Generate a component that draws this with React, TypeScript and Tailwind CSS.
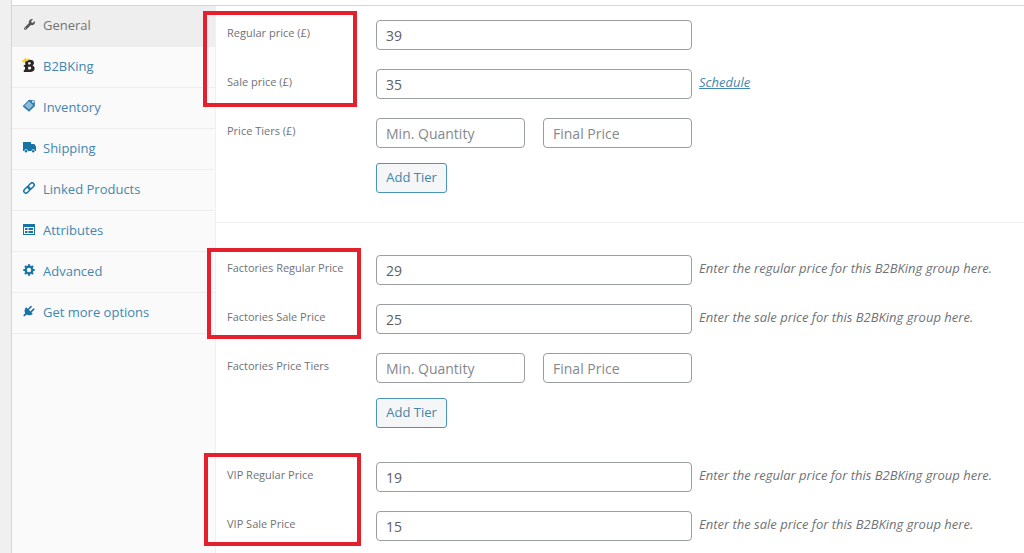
import clsx from "clsx";
import type { ReactNode } from "react";
import { FaWrench } from "react-icons/fa";

const B2BKingIcon = () => (
  <svg viewBox="0 0 14 16" className="h-4 w-3.5">
    <path
      fillRule="evenodd"
      fill="#2b2725"
      d="M3.2 5H2V2.800h5.800c2.700 0 4.200 1.200 4.200 3.300 0 1.200-.6 2.100-1.600 2.500 1.400.4 2.200 1.500 2.200 2.900 0 2.300-1.700 3.500-4.500 3.500H1.800v-2.200h1.200V9.800H1.800V7.900h1.400ZM6.200 5.200v2.200h1.300c.9 0 1.300-.4 1.300-1.100s-.4-1.100-1.300-1.100Zm0 4.500v2.700h1.500c1 0 1.500-.5 1.500-1.400s-.5-1.300-1.500-1.300Z"
    />
    <path d="M.8 5.800 0 3l2 .3L3.300.6l1.600 1.600L7.200 1 6.400 3.400Z" fill="#f5d22e" />
  </svg>
);

const InventoryIcon = () => (
  <svg viewBox="0 0 14 14" className="size-3.5" strokeLinejoin="round">
    <path d="M.6 7.200 7 .8l5.600.8.400 5.400L7 12.800Z" fill="#2a7aa8" />
    <path d="M2 6.600 6.900 1.900l4.700 4.300L7 10.800Z" fill="#8db9d6" stroke="#4288b3" />
    <circle cx="11" cy="2.800" r="1.100" fill="#d3e6f2" />
  </svg>
);

const ShippingIcon = () => (
  <svg viewBox="0 0 13 11" className="h-[11px] w-[13px]" fill="currentColor">
    <path d="M0 0h8v2h3.300L13 4.600V9h-1.100a1.700 1.700 0 0 0-3.400 0H4.700a1.700 1.700 0 0 0-3.400 0H0Z" />
    <circle cx="3" cy="9.300" r="1.200" />
    <circle cx="10.200" cy="9.300" r="1.200" />
  </svg>
);

const LinkIcon = () => (
  <svg viewBox="0 0 12 12" className="size-3">
    <g
      transform="rotate(-45 6 6)"
      fill="none"
      stroke="currentColor"
      strokeWidth="1.500"
    >
      <rect x="-.4" y="3.900" width="7" height="4.200" rx="2.100" />
      <rect x="5.400" y="3.900" width="7" height="4.200" rx="2.100" />
    </g>
  </svg>
);

const AttributesIcon = () => (
  <svg viewBox="0 0 12 11" className="h-[11px] w-3" fill="currentColor">
    <path fillRule="evenodd" d="M0 0h12v11H0ZM1 3v7h10V3Z" />
    <path d="M2 4h2.500v2H2Zm0 3h2.500v2H2Zm3.500-3H10v2H5.500Zm0 3H10v2H5.500Z" />
  </svg>
);

const GearIcon = () => (
  <svg viewBox="0 0 12 12" className="size-3">
    <circle
      cx="6"
      cy="6"
      r="3.300"
      fill="none"
      stroke="currentColor"
      strokeWidth="2.200"
    />
    <path
      d="M6 .3v2M6 9.700v2M.3 6h2M9.700 6h2M2 2l1.400 1.400M8.600 8.600 10 10M10 2 8.600 3.400M3.400 8.600 2 10"
      stroke="currentColor"
      strokeWidth="2.200"
    />
  </svg>
);

const PlugIcon = () => (
  <svg viewBox="0 0 12 12" className="size-3">
    <path
      fill="currentColor"
      d="M3.200 2.200 9.800 8.700C8 10.500 5.500 10.600 3.600 9.500L1.800 11.200H.5V9.900l1.700-1.700C1.100 6.200 1.400 3.900 3.200 2.200Z"
    />
    <path
      d="M5.500 4.300 8 1.600M8 6.800l2.800-2.600"
      stroke="currentColor"
      strokeWidth="1.600"
      strokeLinecap="round"
    />
  </svg>
);

const tabs: { label: string; icon: ReactNode; active?: boolean }[] = [
  { label: "General", icon: <FaWrench className="size-[11px]" />, active: true },
  { label: "B2BKing", icon: <B2BKingIcon /> },
  { label: "Inventory", icon: <InventoryIcon /> },
  { label: "Shipping", icon: <ShippingIcon /> },
  { label: "Linked Products", icon: <LinkIcon /> },
  { label: "Attributes", icon: <AttributesIcon /> },
  { label: "Advanced", icon: <GearIcon /> },
  { label: "Get more options", icon: <PlugIcon /> },
];

const inputClass =
  "h-[30px] min-w-0 rounded border border-[#9a9da1] bg-white px-[9px] text-sm text-[#5c6066] placeholder:text-[#85888c]";

const labelClass = "w-[149px] shrink-0 pt-[5px] text-[11px] leading-4";

const PriceField = ({
  id,
  label,
  value,
  children,
}: {
  id: string;
  label: string;
  value: string;
  children?: ReactNode;
}) => (
  <div className="flex">
    <label htmlFor={id} className={labelClass}>
      {label}
    </label>
    <input id={id} defaultValue={value} className={clsx(inputClass, "w-[316px]")} />
    <div className="ml-[7px] pt-1 text-[13px] leading-[18px] italic">{children}</div>
  </div>
);

const PriceTiers = ({ label }: { label: string }) => (
  <div className="flex" role="group" aria-label={label}>
    <span className={labelClass}>{label}</span>
    <div className="w-[316px]">
      <div className="flex gap-[18px]">
        <input
          placeholder="Min. Quantity"
          aria-label="Min. Quantity"
          className={clsx(inputClass, "flex-1")}
        />
        <input
          placeholder="Final Price"
          aria-label="Final Price"
          className={clsx(inputClass, "flex-1")}
        />
      </div>
      <button
        type="button"
        className="mt-[15px] h-[30px] w-[71px] rounded-[3px] border border-[#4a94ba] bg-[#f4f6f7] text-[13px] whitespace-nowrap text-[#4585a8]"
      >
        Add Tier
      </button>
    </div>
  </div>
);

// Red frame drawn over the labels of a price group
const Highlight = ({ className }: { className: string }) => (
  <div
    className={clsx(
      "pointer-events-none absolute border-4 border-[#e3202b]",
      className,
    )}
  />
);

const App = () => {
  return (
    <div className="flex min-h-screen flex-col bg-[#f0f0f1] pl-[11px] font-['Open_Sans','Noto_Sans',sans-serif] text-[#6f7276]">
      <div className="h-[5px] border-l border-[#d5d6d8] bg-white" />
      <div className="flex flex-1 border-t border-l border-[#d5d6d8] bg-white">
        <nav className="w-[204px] shrink-0 border-r border-[#f0f0f0] bg-[#fafafa]">
          <ul>
            {tabs.map((tab) => (
              <li key={tab.label}>
                <a
                  href="#"
                  className={clsx(
                    "flex h-[41px] items-center border-b border-[#eeeeee] pl-2.5 text-[13px]",
                    tab.active ? "bg-[#eeeeee] text-[#747474]" : "text-[#4387b0]",
                  )}
                >
                  <span
                    className={clsx(
                      "mr-[7px] flex w-3.5 justify-center pb-1",
                      tab.active ? "text-[#555555]" : "text-[#1874a5]",
                    )}
                  >
                    {tab.icon}
                  </span>
                  {tab.label}
                </a>
              </li>
            ))}
          </ul>
        </nav>

        <main className="min-w-0 flex-1">
          <section className="relative flex flex-col gap-[19px] border-b border-[#eeeeee] pt-3.5 pb-[29px] pl-[11px]">
            <PriceField id="regular" label="Regular price (£)" value="39" />
            <PriceField id="sale" label="Sale price (£)" value="35">
              <a href="#" className="text-[#4387b0] underline">
                Schedule
              </a>
            </PriceField>
            <PriceTiers label="Price Tiers (£)" />
            <Highlight className="top-[5px] -left-[13px] h-24 w-[154px]" />
          </section>

          <section className="relative flex flex-col gap-[19px] pt-8 pl-[11px]">
            <PriceField
              id="factories-regular"
              label="Factories Regular Price"
              value="29"
            >
              Enter the regular price for this B2BKing group here.
            </PriceField>
            <PriceField
              id="factories-sale"
              label="Factories Sale Price"
              value="25"
            >
              Enter the sale price for this B2BKing group here.
            </PriceField>
            <PriceTiers label="Factories Price Tiers" />
            <Highlight className="top-[25px] -left-[9px] h-[91px] w-[154px]" />
          </section>

          <section className="relative flex flex-col gap-[19px] pt-[34px] pl-[11px]">
            <PriceField id="vip-regular" label="VIP Regular Price" value="19">
              Enter the regular price for this B2BKing group here.
            </PriceField>
            <PriceField id="vip-sale" label="VIP Sale Price" value="15">
              Enter the sale price for this B2BKing group here.
            </PriceField>
            <Highlight className="top-[25px] -left-3 h-[93px] w-[157px]" />
          </section>
        </main>
      </div>
    </div>
  );
};

export default App;
